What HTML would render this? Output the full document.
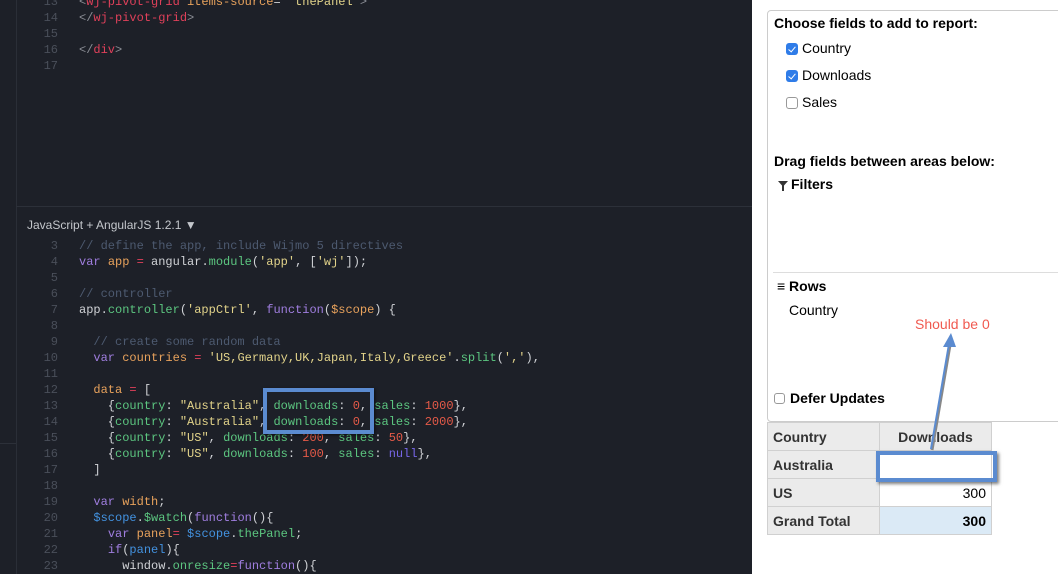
<!DOCTYPE html>
<html><head><meta charset="utf-8"><style>
*{margin:0;padding:0;box-sizing:border-box}
body{width:1058px;height:574px;overflow:hidden;background:#fff;position:relative;font-family:"Liberation Sans",sans-serif}
#ed{position:absolute;left:0;top:0;width:752px;height:574px;background:#1d2028;overflow:hidden}
.vl{position:absolute;left:16px;top:0;width:1px;height:574px;background:#2a2e37}
.hl{position:absolute;left:16px;top:206px;width:736px;height:1px;background:#2c3039}
.hl2{position:absolute;left:0;top:443px;width:16px;height:1px;background:#2c3039}
.code{position:absolute;left:0;font-family:"Liberation Mono",monospace;font-size:12px;line-height:16px;white-space:pre;color:#d0d2d6}
.code span{line-height:16px}
.ln{display:inline-block;width:58px;text-align:right;color:#4a4f5a;margin-right:21px;font-size:12px;height:16px;vertical-align:top}
.k{color:#a07ee0}.v{color:#e8a25c}.s{color:#e2d38a}.f{color:#5cc680}.c{color:#4d5a70}.n{color:#e55a48}.nl{color:#7766e8}.sc{color:#4392e0}.t{color:#e0405a}.p{color:#8a8d95}
#hdr{position:absolute;left:27px;top:218px;font-size:12px;color:#c4c7cc}
#rp{position:absolute;left:752px;top:0;width:306px;height:574px;background:#fff}
#panel{position:absolute;left:767px;top:10px;width:300px;height:412px;border:1px solid #ccc;border-radius:4px}
.b{position:absolute;font-weight:bold;font-size:14px;color:#000}
.r{position:absolute;font-size:14px;color:#000}
.cb{position:absolute;width:12px;height:12px;border-radius:3px}
.on{background:#2f7ce8}
.on:after{content:"";position:absolute;left:4px;top:2px;width:3px;height:6px;border:solid #fff;border-width:0 1.5px 1.5px 0;transform:rotate(40deg)}
.off{border:1px solid #999;background:#fff}
table{position:absolute;left:767px;top:422px;border-collapse:collapse;font-size:14px}
td{border:1px solid #d0d0d0;height:28px;padding:0 5px;color:#333}
td.h{background:#ebebeb;font-weight:bold;width:112px}
</style></head><body>
<div id="ed">
<div class="vl"></div><div class="hl"></div><div class="hl2"></div>
<div class="code" style="top:-6px"><span class="ln">13</span><span class="p">&lt;</span><span class="t">wj-pivot-grid</span> <span class="v">items-source</span>= <span class="s">"thePanel"</span><span class="p">&gt;</span>
<span class="ln">14</span><span class="p">&lt;/</span><span class="t">wj-pivot-grid</span><span class="p">&gt;</span>
<span class="ln">15</span>
<span class="ln">16</span><span class="p">&lt;/</span><span class="t">div</span><span class="p">&gt;</span>
<span class="ln">17</span></div>
<div id="hdr">JavaScript + AngularJS 1.2.1 ▼</div>
<div class="code" style="top:238px"><span class="ln">3</span><span class="c">// define the app, include Wijmo 5 directives</span>
<span class="ln">4</span><span class="k">var</span> <span class="v">app</span> <span class="t">=</span> angular.<span class="f">module</span>(<span class="s">'app'</span>, [<span class="s">'wj'</span>]);
<span class="ln">5</span>
<span class="ln">6</span><span class="c">// controller</span>
<span class="ln">7</span>app.<span class="f">controller</span>(<span class="s">'appCtrl'</span>, <span class="k">function</span>(<span class="v">$scope</span>) {
<span class="ln">8</span>
<span class="ln">9</span>  <span class="c">// create some random data</span>
<span class="ln">10</span>  <span class="k">var</span> <span class="v">countries</span> <span class="t">=</span> <span class="s">'US,Germany,UK,Japan,Italy,Greece'</span>.<span class="f">split</span>(<span class="s">','</span>),
<span class="ln">11</span>
<span class="ln">12</span>  <span class="v">data</span> <span class="t">=</span> [
<span class="ln">13</span>    {<span class="f">country</span>: <span class="s">"Australia"</span>, <span class="f">downloads</span>: <span class="n">0</span>, <span class="f">sales</span>: <span class="n">1000</span>},
<span class="ln">14</span>    {<span class="f">country</span>: <span class="s">"Australia"</span>, <span class="f">downloads</span>: <span class="n">0</span>, <span class="f">sales</span>: <span class="n">2000</span>},
<span class="ln">15</span>    {<span class="f">country</span>: <span class="s">"US"</span>, <span class="f">downloads</span>: <span class="n">200</span>, <span class="f">sales</span>: <span class="n">50</span>},
<span class="ln">16</span>    {<span class="f">country</span>: <span class="s">"US"</span>, <span class="f">downloads</span>: <span class="n">100</span>, <span class="f">sales</span>: <span class="nl">null</span>},
<span class="ln">17</span>  ]
<span class="ln">18</span>
<span class="ln">19</span>  <span class="k">var</span> <span class="v">width</span>;
<span class="ln">20</span>  <span class="sc">$scope</span>.<span class="f">$watch</span>(<span class="k">function</span>(){
<span class="ln">21</span>    <span class="k">var</span> <span class="v">panel</span><span class="t">=</span> <span class="sc">$scope</span>.<span class="f">thePanel</span>;
<span class="ln">22</span>    <span class="k">if</span>(<span class="sc">panel</span>){
<span class="ln">23</span>      window.<span class="f">onresize</span><span class="t">=</span><span class="k">function</span>(){</div>
<div style="position:absolute;left:263px;top:388px;width:111px;height:46px;border:4px solid #5b8bd0;box-shadow:1px 1px 3px rgba(0,0,0,.6)"></div>
</div>
<div id="rp"></div>
<div id="panel"></div>
<div class="b" style="left:774px;top:15px">Choose fields to add to report:</div>
<div class="cb on" style="left:786px;top:43px"></div><div class="r" style="left:802px;top:40px">Country</div>
<div class="cb on" style="left:786px;top:70px"></div><div class="r" style="left:802px;top:67px">Downloads</div>
<div class="cb off" style="left:786px;top:97px"></div><div class="r" style="left:802px;top:94px">Sales</div>
<div class="b" style="left:774px;top:153px">Drag fields between areas below:</div>
<svg style="position:absolute;left:778px;top:180px" width="10" height="12"><path d="M0 1H10L6 5.5V11L4 11V5.5Z" fill="#333"/></svg>
<div class="b" style="left:791px;top:176px">Filters</div>
<div style="position:absolute;left:773px;top:272px;width:285px;height:1px;background:#ddd"></div>
<div class="b" style="left:777px;top:278px">≡ Rows</div>
<div class="r" style="left:789px;top:302px">Country</div>
<div style="position:absolute;left:915px;top:316px;font-size:14px;color:#f05a50">Should be 0</div>
<div class="cb off" style="left:774px;top:393px;width:11px;height:11px"></div><div class="b" style="left:790px;top:390px">Defer Updates</div>
<table>
<tr><td class="h">Country</td><td class="h" style="text-align:center">Downloads</td></tr>
<tr><td class="h">Australia</td><td style="background:#fff"></td></tr>
<tr><td class="h">US</td><td style="text-align:right;color:#000;background:#fff">300</td></tr>
<tr><td class="h">Grand Total</td><td style="text-align:right;background:#dbeaf6;font-weight:bold;color:#000">300</td></tr>
</table>
<div style="position:absolute;left:876px;top:451px;width:121px;height:31px;border:4px solid #5b8bd0;box-shadow:2px 2px 3px rgba(0,0,0,.5)"></div>
<svg style="position:absolute;left:0;top:0" width="1058" height="574">
<line x1="931" y1="449" x2="949" y2="344" stroke="#888" stroke-width="3" transform="translate(1,1)"/>
<line x1="931" y1="449" x2="949" y2="344" stroke="#5b8bd0" stroke-width="2"/>
<polygon points="951,333 943,347 956,347" fill="#5b8bd0"/>
</svg>
</body></html>
